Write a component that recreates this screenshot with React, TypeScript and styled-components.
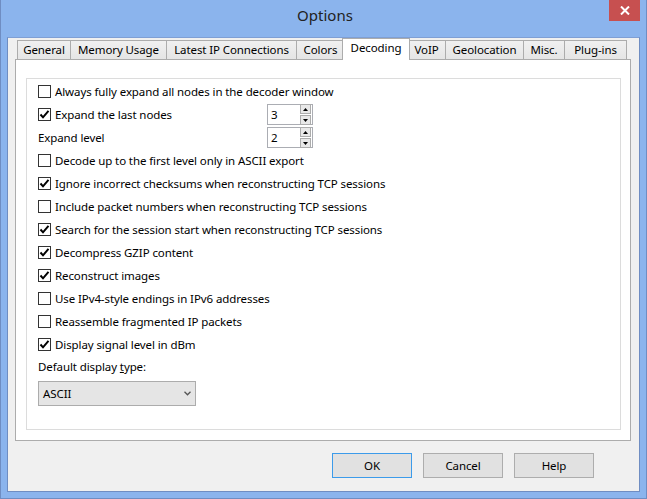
import React from 'react'
import styled, { createGlobalStyle } from 'styled-components'

const GlobalStyle = createGlobalStyle`
  html, body {
    margin: 0;
    padding: 0;
    background: #fff;
  }
  body {
    font-family: 'Noto Sans', 'Liberation Sans', sans-serif;
    font-size: 11.5px;
    letter-spacing: -0.1px;
    color: #000;
  }
`

const tabs = [
  { name: 'General', width: 54 },
  { name: 'Memory Usage', width: 97 },
  { name: 'Latest IP Connections', width: 131 },
  { name: 'Colors', width: 49 },
  { name: 'Decoding', width: 64, selected: true },
  { name: 'VoIP', width: 39 },
  { name: 'Geolocation', width: 79 },
  { name: 'Misc.', width: 42 },
  { name: 'Plug-ins', width: 63 },
]

const options = [
  { label: 'Always fully expand all nodes in the decoder window', checked: false },
  { label: 'Expand the last nodes', checked: true, spin: '3' },
  { label: 'Expand level', noBox: true, spin: '2' },
  { label: 'Decode up to the first level only in ASCII export', checked: false },
  { label: 'Ignore incorrect checksums when reconstructing TCP sessions', checked: true },
  { label: 'Include packet numbers when reconstructing TCP sessions', checked: false },
  { label: 'Search for the session start when reconstructing TCP sessions', checked: true },
  { label: 'Decompress GZIP content', checked: true },
  { label: 'Reconstruct images', checked: true },
  { label: 'Use IPv4-style endings in IPv6 addresses', checked: false },
  { label: 'Reassemble fragmented IP packets', checked: false },
  { label: 'Display signal level in dBm', checked: true },
]

const Window = styled.div`
  width: 647px;
  height: 499px;
  box-sizing: border-box;
  background: #8bb4ed;
  border: 1px solid #6f8dc2;
  border-top: 0;
  padding: 0 6px 6px 6px;
  display: flex;
  flex-direction: column;
`

const TitleBar = styled.div`
  height: 37px;
  flex: none;
  display: grid;
  grid-template-columns: 1fr auto 1fr;
`

const Title = styled.div`
  grid-column: 2;
  font-size: 15px;
  letter-spacing: 0;
  color: #222;
  line-height: 31px;
  padding-left: 3px;
`

const CloseButton = styled.div`
  grid-column: 3;
  justify-self: end;
  width: 31px;
  height: 21px;
  background: #c75050;
  display: flex;
  align-items: center;
  justify-content: center;
`

const Client = styled.div`
  flex: 1;
  background: #f0f0f0;
  border: 1px solid #6f8dc2;
  border-top-color: #7f9fd4;
  padding: 0 8px 0 7px;
  display: flex;
  flex-direction: column;
`

const TabStrip = styled.div`
  height: 21px;
  display: flex;
  align-items: flex-end;
  padding-left: 2px;
`

const Tab = styled.div<{ $w: number; $selected?: boolean }>`
  box-sizing: border-box;
  width: ${p => p.$w + (p.$selected ? 4 : 0)}px;
  height: ${p => (p.$selected ? 22 : 19)}px;
  margin-left: ${p => (p.$selected ? -3 : -1)}px;
  margin-right: ${p => (p.$selected ? -2 : 0)}px;
  margin-bottom: ${p => (p.$selected ? -1 : 0)}px;
  border: 1px solid #acacac;
  border-bottom: 0;
  background: ${p => (p.$selected ? '#fff' : 'linear-gradient(#f0f0f0, #e5e5e5)')};
  position: ${p => (p.$selected ? 'relative' : 'static')};
  z-index: ${p => (p.$selected ? 2 : 'auto')};
  text-align: center;
  line-height: 17px;
  white-space: nowrap;

  &:first-child {
    margin-left: 0;
  }
`

const Panel = styled.div`
  height: 382px;
  box-sizing: border-box;
  background: #fff;
  border: 1px solid #acacac;
  padding: 18px 9px 10px 10px;
  display: flex;
`

const Group = styled.div`
  flex: 1;
  border: 1px solid #dcdcdc;
  padding: 1px 11px 0 11px;
  display: flex;
  flex-direction: column;
`

const Row = styled.div`
  height: 23px;
  display: grid;
  grid-template-columns: 229px auto;
  align-items: center;
`

const CheckLabel = styled.div`
  display: flex;
  align-items: center;
  gap: 4px;
  white-space: nowrap;
`

const Box = styled.div`
  width: 13px;
  height: 13px;
  box-sizing: border-box;
  border: 1px solid #333;
  background: #fff;
  display: flex;
  align-items: center;
  justify-content: center;
  flex: none;
`

const Spinner = styled.div`
  width: 46px;
  height: 21px;
  box-sizing: border-box;
  border: 1px solid #abadb3;
  background: #fff;
  display: flex;
  align-items: center;
  justify-content: space-between;
  padding: 0 1px 0 3px;
`

const SpinButtons = styled.div`
  display: flex;
  flex-direction: column;
  gap: 1px;
`

const SpinButton = styled.div`
  width: 9px;
  height: 8px;
  border: 1px solid #acacac;
  background: #e8e8e8;
  display: flex;
  align-items: center;
  justify-content: center;
`

const FieldLabel = styled.div`
  height: 22px;
  line-height: 22px;
`

const Select = styled.div`
  margin-top: 3px;
  width: 158px;
  height: 25px;
  box-sizing: border-box;
  border: 1px solid #acacac;
  background: #e5e5e5;
  display: flex;
  align-items: center;
  justify-content: space-between;
  padding: 0 4px 0 4px;
`

const ButtonRow = styled.div`
  display: flex;
  justify-content: flex-end;
  gap: 11px;
  padding: 12px 37px 0 0;
`

const Button = styled.div<{ $default?: boolean }>`
  width: 80px;
  height: 25px;
  box-sizing: border-box;
  border: 1px solid ${p => (p.$default ? '#3c9bea' : '#adadad')};
  background: #e1e1e1;
  display: flex;
  align-items: center;
  justify-content: center;
`

const Check = () => (
  <svg width="11" height="11" viewBox="0 0 11 11">
    <polyline points="1.5,5.5 4,8.3 9.5,1.8" fill="none" stroke="#000" strokeWidth="2" />
  </svg>
)

const Arrow = ({ up }: { up?: boolean }) => (
  <svg width="5" height="3" viewBox="0 0 5 3">
    <polygon points={up ? '0,3 5,3 2.5,0' : '0,0 5,0 2.5,3'} fill="#000" />
  </svg>
)

const App: React.FC = () => (
  <>
    <GlobalStyle />
    <Window>
      <TitleBar>
        <Title>Options</Title>
        <CloseButton>
          <svg width="10" height="9" viewBox="0 0 10 9">
            <path d="M1 0.5 L9 8.5 M9 0.5 L1 8.5" stroke="#fff" strokeWidth="2" />
          </svg>
        </CloseButton>
      </TitleBar>
      <Client>
        <TabStrip>
          {tabs.map(t => (
            <Tab key={t.name} $w={t.width} $selected={t.selected}>
              {t.name}
            </Tab>
          ))}
        </TabStrip>
        <Panel>
          <Group>
            {options.map(o => (
              <Row key={o.label}>
                <CheckLabel>
                  {!o.noBox && <Box>{o.checked && <Check />}</Box>}
                  <span>{o.label}</span>
                </CheckLabel>
                {o.spin && (
                  <Spinner>
                    <span>{o.spin}</span>
                    <SpinButtons>
                      <SpinButton>
                        <Arrow up />
                      </SpinButton>
                      <SpinButton>
                        <Arrow />
                      </SpinButton>
                    </SpinButtons>
                  </Spinner>
                )}
              </Row>
            ))}
            <FieldLabel>
              Default display <u>t</u>ype:
            </FieldLabel>
            <Select>
              <span>ASCII</span>
              <svg width="7" height="5" viewBox="0 0 7 5">
                <polyline points="0.5,0.8 3.5,3.8 6.5,0.8" fill="none" stroke="#555" strokeWidth="1.3" />
              </svg>
            </Select>
          </Group>
        </Panel>
        <ButtonRow>
          <Button $default>OK</Button>
          <Button>Cancel</Button>
          <Button>Help</Button>
        </ButtonRow>
      </Client>
    </Window>
  </>
)

export default App
